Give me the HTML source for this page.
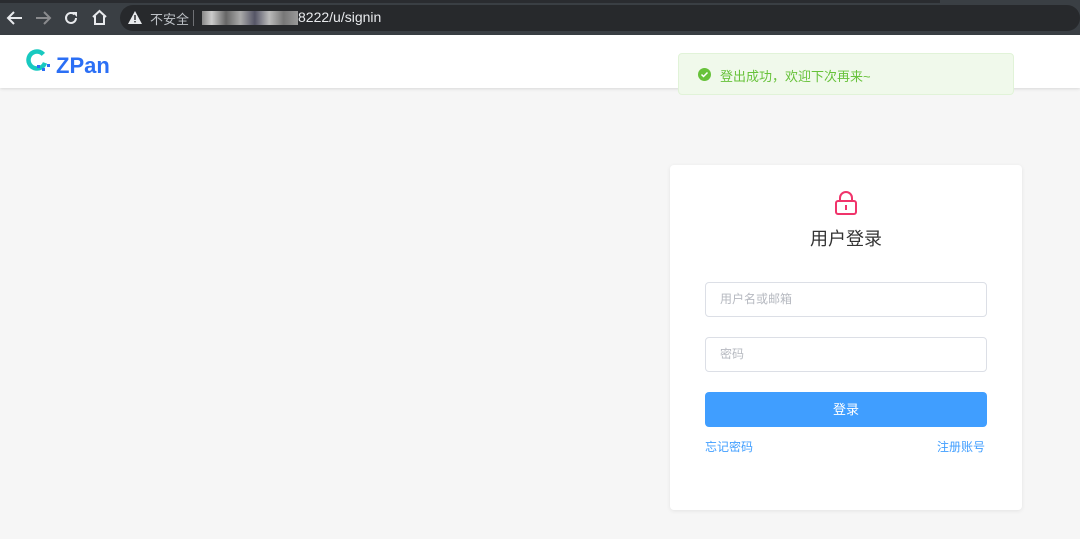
<!DOCTYPE html>
<html><head><meta charset="utf-8"><style>
*{margin:0;padding:0;box-sizing:border-box}
body{width:1080px;height:539px;overflow:hidden;background:#f6f6f6;font-family:"Liberation Sans","Noto Sans CJK SC",sans-serif;position:relative}
.bar{position:absolute;left:0;top:0;width:1080px;height:35px;background:#3a3f44}
.bar .top{position:absolute;left:0;top:0;width:940px;height:3px;background:#2a2c30}
.omni{position:absolute;left:120px;top:5px;width:960px;height:26px;border-radius:13px;background:#27292c}
.bar span{position:absolute;color:#e8eaed;font-size:14px}
.hdr{position:absolute;left:0;top:35px;width:1080px;height:53px;background:#fff;box-shadow:0 1px 3px rgba(0,0,0,.12)}
.toast{position:absolute;left:678px;top:53px;width:336px;height:42px;background:#f0f9eb;border:1px solid #e1f3d8;border-radius:4px}
.card{position:absolute;left:670px;top:165px;width:352px;height:345px;background:#fff;border-radius:4px;box-shadow:0 1px 4px rgba(0,0,0,.08)}
.inp{position:absolute;left:35px;width:282px;height:35px;border:1px solid #dcdfe6;border-radius:4px;color:#b6b9c0;font-size:12px;padding-left:14px;line-height:33px}
</style></head><body>
<div class="bar"><div class="top"></div>
<svg style="position:absolute;left:6px;top:10px" width="18" height="16" viewBox="0 0 18 16"><path d="M16 8H3M8 2L2 8l6 6" stroke="#e8eaed" stroke-width="2" fill="none"/></svg>
<svg style="position:absolute;left:34px;top:10px" width="18" height="16" viewBox="0 0 18 16"><path d="M2 8h13M10 2l6 6-6 6" stroke="#8a8b8e" stroke-width="2" fill="none"/></svg>
<svg style="position:absolute;left:63px;top:10px" width="16" height="16" viewBox="0 0 16 16"><path d="M13 8a5 5 0 1 1-1.5-3.6" stroke="#e8eaed" stroke-width="2" fill="none"/><path d="M9 2h5v5z" fill="#e8eaed"/></svg>
<svg style="position:absolute;left:91px;top:9px" width="17" height="17" viewBox="0 0 17 17"><path d="M2 8L8.5 2 15 8M4 7v8h9V7" stroke="#e8eaed" stroke-width="2" fill="none"/></svg>
<div class="omni"></div>
<svg style="position:absolute;left:128px;top:11px" width="14" height="13" viewBox="0 0 14 13"><path d="M7 0L14 13H0z" fill="#e8eaed"/><rect x="6.3" y="4" width="1.4" height="5" fill="#202124"/><rect x="6.3" y="10" width="1.4" height="1.4" fill="#202124"/></svg>
<span style="left:150px;top:9px;font-size:13px;color:#bdc1c6">不安全</span>
<div style="position:absolute;left:193px;top:10px;width:1px;height:16px;background:#6f7175"></div>
<div style="position:absolute;left:202px;top:11px;width:96px;height:14px;background:linear-gradient(90deg,#888,#ccc 10%,#666 25%,#aaa 40%,#556 55%,#bbb 70%,#777 85%,#999)"></div>
<span style="left:298px;top:9px">8222/u/signin</span>
</div>
<div class="hdr">
<svg style="position:absolute;left:26px;top:14px" width="26" height="26" viewBox="0 0 26 26"><circle cx="11" cy="11" r="8.5" stroke="#18c9c0" stroke-width="4.5" fill="none" stroke-dasharray="44 10" transform="rotate(20 11 11)"/><rect x="11" y="16" width="3" height="3" fill="#2b6ff5"/><rect x="16" y="19" width="3" height="3" fill="#2b6ff5"/><rect x="21" y="15" width="3" height="3" fill="#2b6ff5"/></svg>
<span style="position:absolute;left:56px;top:18px;font-size:22px;font-weight:bold;color:#2b6ff5">ZPan</span>
</div>
<div class="toast">
<svg style="position:absolute;left:19px;top:14px" width="13" height="13" viewBox="0 0 13 13"><circle cx="6.5" cy="6.5" r="6.5" fill="#67c23a"/><path d="M3.5 6.5l2 2 4-4" stroke="#fff" stroke-width="1.5" fill="none"/></svg>
<span style="position:absolute;left:41px;top:12px;font-size:13px;color:#67c23a">登出成功，欢迎下次再来~</span>
</div>
<div class="card">
<svg style="position:absolute;left:165px;top:26px" width="22" height="24" viewBox="0 0 22 24"><path d="M5 11V7a6 6 0 0 1 12 0v4" stroke="#f0346b" stroke-width="2" fill="none"/><rect x="1" y="10" width="20" height="13" rx="2" stroke="#f0346b" stroke-width="2" fill="none"/><rect x="10" y="14" width="2" height="5" fill="#f0346b"/></svg>
<div style="position:absolute;left:0;width:352px;top:60px;text-align:center;font-size:18px;color:#333">用户登录</div>
<div class="inp" style="top:117px">用户名或邮箱</div>
<div class="inp" style="top:172px">密码</div>
<div style="position:absolute;left:35px;top:227px;width:282px;height:35px;background:#409eff;border-radius:4px;color:#fff;font-size:13px;text-align:center;line-height:35px">登录</div>
<span style="position:absolute;left:35px;top:273px;font-size:12px;color:#409eff">忘记密码</span>
<span style="position:absolute;left:267px;top:273px;font-size:12px;color:#409eff">注册账号</span>
</div>
</body></html>
